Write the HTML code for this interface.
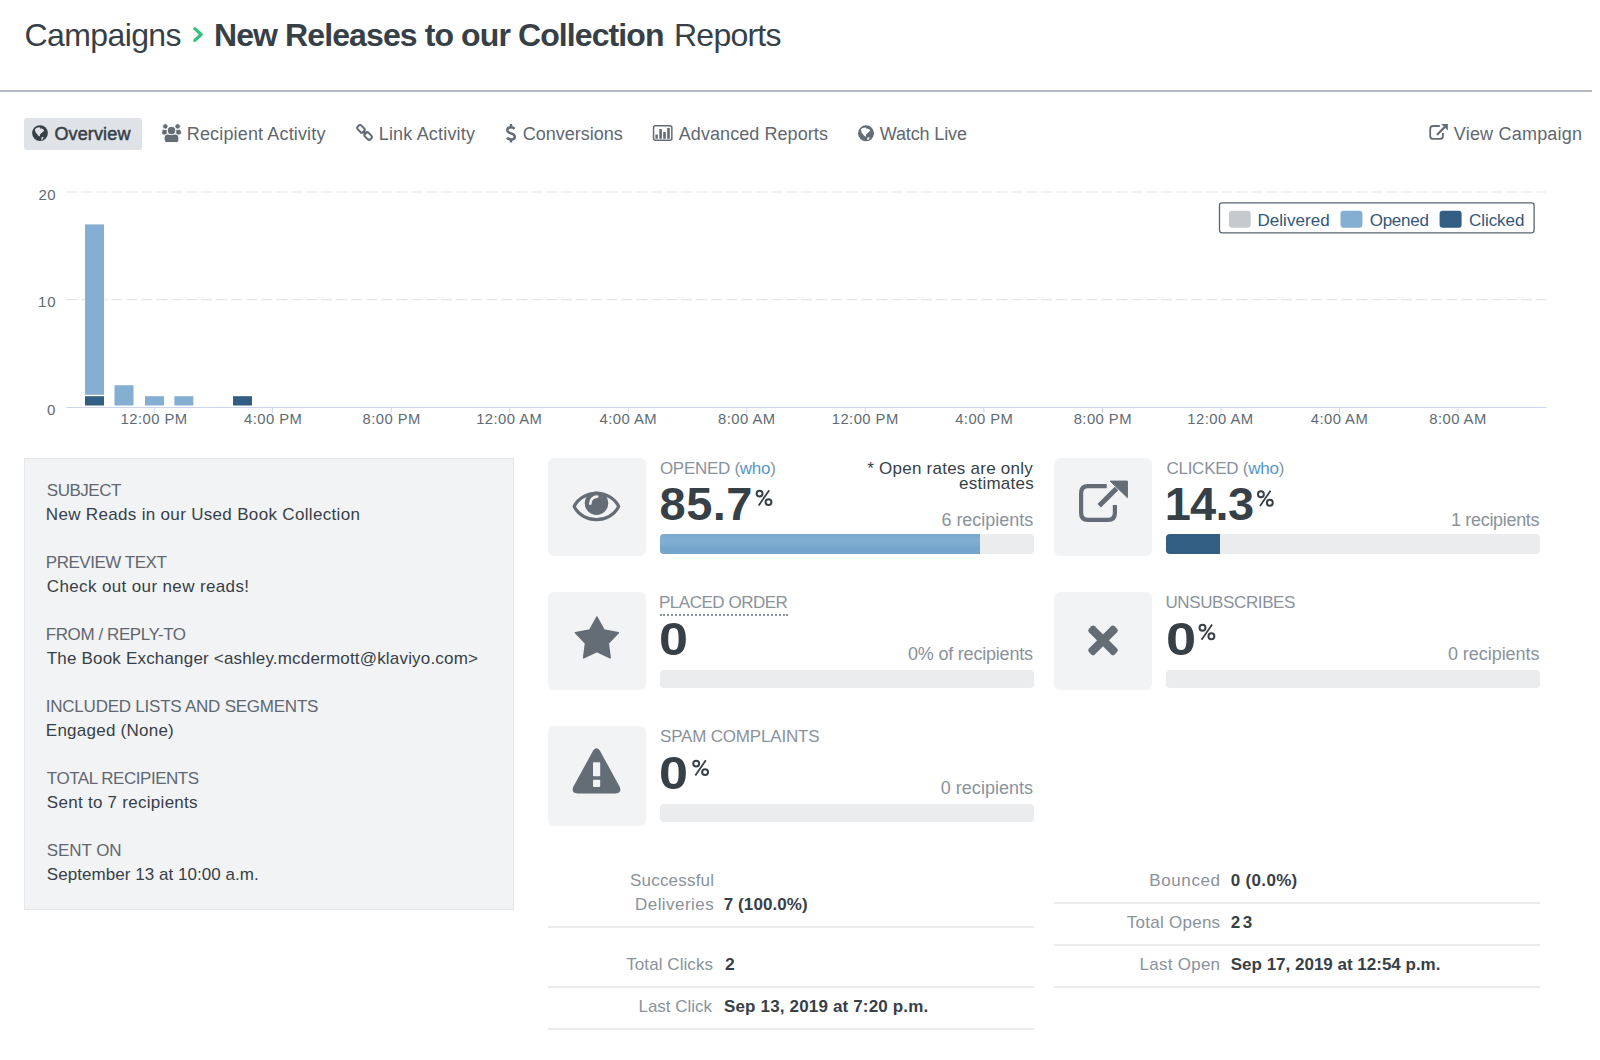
<!DOCTYPE html>
<html>
<head>
<meta charset="utf-8">
<style>
html,body{margin:0;padding:0;background:#fff;}
body{width:1600px;height:1060px;position:relative;overflow:hidden;font-family:"Liberation Sans",sans-serif;-webkit-font-smoothing:antialiased;}
.t{position:absolute;white-space:pre;}
.r{position:absolute;}
</style>
</head>
<body>
<!-- header rule -->
<div class="r" style="left:0;top:90px;width:1592px;height:2px;background:#b5bac2"></div>
<!-- overview pill -->
<div class="r" style="left:24px;top:118px;width:118px;height:32px;background:#dfe2e6;border-radius:3px"></div>
<!-- panel -->
<div class="r" style="left:24px;top:458px;width:488px;height:450px;background:#f2f3f5;border:1px solid #e6e8eb"></div>
<!-- icon boxes -->
<div class="r" style="left:548px;top:458px;width:98px;height:98px;background:#f2f3f5;border-radius:6px"></div>
<div class="r" style="left:1054px;top:458px;width:98px;height:98px;background:#f2f3f5;border-radius:6px"></div>
<div class="r" style="left:548px;top:592px;width:98px;height:98px;background:#f2f3f5;border-radius:6px"></div>
<div class="r" style="left:1054px;top:592px;width:98px;height:98px;background:#f2f3f5;border-radius:6px"></div>
<div class="r" style="left:548px;top:726px;width:98px;height:100px;background:#f2f3f5;border-radius:6px"></div>
<!-- progress bars -->
<div class="r" style="left:660px;top:534px;width:374px;height:20px;background:#ebecee;border-radius:4px;overflow:hidden"><div style="width:320px;height:20px;background:linear-gradient(#79a9cf,#82aed2 30%,#7cabd0 55%,#74a6cd 70%,#74a6cd)"></div></div>
<div class="r" style="left:1166px;top:534px;width:374px;height:20px;background:#ebecee;border-radius:4px;overflow:hidden"><div style="width:54px;height:20px;background:#335e84"></div></div>
<div class="r" style="left:660px;top:670px;width:374px;height:18px;background:#ebecee;border-radius:4px"></div>
<div class="r" style="left:1166px;top:670px;width:374px;height:18px;background:#ebecee;border-radius:4px"></div>
<div class="r" style="left:660px;top:804px;width:374px;height:18px;background:#ebecee;border-radius:4px"></div>
<!-- placed order dotted underline -->
<div class="r" style="left:660px;top:614px;width:128px;height:0;border-top:2px dotted #8a929b"></div>
<!-- table lines -->
<div class="r" style="left:548px;top:926px;width:486px;height:2px;background:#e9ebed"></div>
<div class="r" style="left:548px;top:986px;width:486px;height:2px;background:#e9ebed"></div>
<div class="r" style="left:548px;top:1028px;width:486px;height:2px;background:#e9ebed"></div>
<div class="r" style="left:1054px;top:902px;width:486px;height:2px;background:#e9ebed"></div>
<div class="r" style="left:1054px;top:944px;width:486px;height:2px;background:#e9ebed"></div>
<div class="r" style="left:1054px;top:986px;width:486px;height:2px;background:#e9ebed"></div>

<svg class="r" style="left:0;top:0" width="1600" height="1060" viewBox="0 0 1600 1060">
<!-- chevron -->
<path d="M194.8,28.6 L201.2,34.5 L194.8,40.4" fill="none" stroke="#33c27c" stroke-width="3.2" stroke-linecap="round" stroke-linejoin="round"/>
<!-- overview globe -->
<g>
<circle cx="40" cy="133.1" r="7.9" fill="#373f47"/>
<path d="M34.8,129.4 L36.6,127.8 L40,127.3 L40.6,128.9 L41.6,128.3 L43.4,129.4 L44.3,130.5 L41.6,133 L39.8,134.6 L40.2,136.6 L38.4,135.7 L35.5,132.3 Z" fill="#dfe2e6"/>
<path d="M41.6,137.3 L43.8,137.1 L42.5,139.6 L41.1,139.8 Z" fill="#dfe2e6"/>
</g>
<!-- users -->
<g fill="#646c75" stroke="#fff" stroke-width="0.9">
<path d="M162.4,129.3 H167.2 V135 H163.9 Q161.5,135 161.5,132.8 Z"/>
<path d="M175.8,129.3 H180.6 L181.5,132.8 Q181.5,135 179.1,135 H175.8 Z"/>
<circle cx="165.35" cy="126.4" r="2.7"/>
<circle cx="177.6" cy="126.4" r="2.7"/>
<path d="M164.2,142.5 V137.3 Q164.2,134.1 167.4,134.1 H175.6 Q178.8,134.1 178.8,137.3 V140.3 Q178.8,142.5 176.6,142.5 H166.4 Q164.2,142.5 164.2,140.3 Z"/>
<circle cx="171.5" cy="130.5" r="4.1"/>
</g>
<!-- link -->
<g fill="none" stroke="#646c75" stroke-width="2">
<rect x="-4" y="-2.6" width="8" height="5.2" rx="2.3" transform="translate(361,128.9) rotate(45)"/>
<rect x="-4" y="-2.6" width="8" height="5.2" rx="2.3" transform="translate(368.1,136) rotate(45)"/>
<path d="M362.8,130.7 L366.3,134.2"/>
</g>
<!-- dollar -->
<g fill="none" stroke="#646c75" stroke-width="2.5">
<path d="M514.6,128.8 C513.5,127.6 512.3,127.3 511,127.3 C508.8,127.3 507.3,128.6 507.3,130.3 C507.3,132.3 509.2,132.8 511,133.4 C513,134 514.8,134.8 514.8,136.7 C514.8,138.5 513.1,139.5 511,139.5 C509.4,139.5 508.1,138.9 507,137.6"/>
<path d="M511,123.9 V127.3 M511,139.5 V142.6"/>
</g>
<!-- bar chart icon -->
<g fill="#646c75">
<rect x="653.55" y="125.85" width="18.3" height="14.5" rx="2" fill="none" stroke="#646c75" stroke-width="1.5"/>
<rect x="655.4" y="134.5" width="2.4" height="4.25"/>
<rect x="659.3" y="129.1" width="2.6" height="9.65"/>
<rect x="663.2" y="132" width="2.6" height="6.75"/>
<rect x="667.2" y="128" width="2.6" height="10.75"/>
</g>
<!-- watch live globe -->
<g>
<circle cx="866" cy="133.3" r="8" fill="#646c75"/>
<path d="M860.8,129.6 L862.6,128 L866,127.5 L866.6,129.1 L867.6,128.5 L869.4,129.6 L870.3,130.7 L867.6,133.2 L865.8,134.8 L866.2,136.8 L864.4,135.9 L861.5,132.5 Z" fill="#fff"/>
<path d="M867.6,137.5 L869.8,137.3 L868.5,139.8 L867.1,140 Z" fill="#fff"/>
</g>
<!-- view campaign external link -->
<g fill="none" stroke="#646c75" stroke-width="1.8">
<path d="M1439.8,126 H1433.2 Q1430.2,126 1430.2,129 V135.9 Q1430.2,138.9 1433.2,138.9 H1439.9 Q1442.9,138.9 1442.9,135.9 V133"/>
<path d="M1437.6,134.2 L1444,127.8" stroke-width="2.3" stroke-linecap="round"/>
</g>
<path d="M1441.2,124.1 H1447.9 V130.5 Z" fill="#646c75"/>

<!-- chart grid -->
<line x1="66.25" y1="192" x2="1546" y2="192" stroke="#e6e6e6" stroke-width="1.2" stroke-dasharray="11,4"/>
<line x1="66.25" y1="299.7" x2="1546" y2="299.7" stroke="#e6e6e6" stroke-width="1.2" stroke-dasharray="11,4"/>
<line x1="66.5" y1="407.5" x2="1546.7" y2="407.5" stroke="#ccd6eb" stroke-width="1"/>
<g fill="none" stroke="#373f47" stroke-width="2"><circle cx="759.60" cy="493.60" r="2.95"/><circle cx="768.50" cy="502.10" r="2.95"/><path d="M769.20,490.20 L758.70,505.50" stroke-width="1.8"/></g><g fill="none" stroke="#373f47" stroke-width="2"><circle cx="1260.90" cy="494.20" r="2.95"/><circle cx="1269.80" cy="502.70" r="2.95"/><path d="M1270.50,490.80 L1260.00,506.10" stroke-width="1.8"/></g><g fill="none" stroke="#373f47" stroke-width="2"><circle cx="1202.50" cy="627.80" r="2.95"/><circle cx="1211.40" cy="636.30" r="2.95"/><path d="M1212.10,624.40 L1201.60,639.70" stroke-width="1.8"/></g><g fill="none" stroke="#373f47" stroke-width="2"><circle cx="696.20" cy="763.60" r="2.95"/><circle cx="705.10" cy="772.10" r="2.95"/><path d="M705.80,760.20 L695.30,775.50" stroke-width="1.8"/></g><line x1="154.20" y1="407.5" x2="154.20" y2="413" stroke="#ccd6eb" stroke-width="1"/><line x1="272.73" y1="407.5" x2="272.73" y2="413" stroke="#ccd6eb" stroke-width="1"/><line x1="391.25" y1="407.5" x2="391.25" y2="413" stroke="#ccd6eb" stroke-width="1"/><line x1="509.78" y1="407.5" x2="509.78" y2="413" stroke="#ccd6eb" stroke-width="1"/><line x1="628.31" y1="407.5" x2="628.31" y2="413" stroke="#ccd6eb" stroke-width="1"/><line x1="746.84" y1="407.5" x2="746.84" y2="413" stroke="#ccd6eb" stroke-width="1"/><line x1="865.36" y1="407.5" x2="865.36" y2="413" stroke="#ccd6eb" stroke-width="1"/><line x1="983.89" y1="407.5" x2="983.89" y2="413" stroke="#ccd6eb" stroke-width="1"/><line x1="1102.42" y1="407.5" x2="1102.42" y2="413" stroke="#ccd6eb" stroke-width="1"/><line x1="1220.95" y1="407.5" x2="1220.95" y2="413" stroke="#ccd6eb" stroke-width="1"/><line x1="1339.47" y1="407.5" x2="1339.47" y2="413" stroke="#ccd6eb" stroke-width="1"/><line x1="1458.00" y1="407.5" x2="1458.00" y2="413" stroke="#ccd6eb" stroke-width="1"/>
<!-- bars -->
<rect x="85" y="224.4" width="19" height="170.4" fill="#84afd3"/>
<rect x="85" y="396.2" width="19" height="9.3" fill="#335e84"/>
<rect x="114.5" y="385.2" width="19" height="20.3" fill="#84afd3"/>
<rect x="145" y="396.2" width="19" height="9.3" fill="#84afd3"/>
<rect x="174.4" y="396.2" width="19" height="9.3" fill="#84afd3"/>
<rect x="233" y="396.2" width="19" height="9.3" fill="#335e84"/>
<!-- legend -->
<rect x="1219.5" y="202.8" width="314.6" height="30" rx="2.5" fill="#fff" stroke="#5a6572" stroke-width="1.3"/>
<rect x="1228.9" y="210.7" width="21.8" height="17" rx="3" fill="#c6c9cd"/>
<rect x="1340.5" y="210.7" width="21.9" height="17" rx="3" fill="#84afd3"/>
<rect x="1439.6" y="210.7" width="22" height="17" rx="3" fill="#335e84"/>

<!-- eye -->
<g>
<path d="M574.1,506.4 C583,489 610,489 618.7,506.4 C610,524 583,524 574.1,506.4 Z" fill="none" stroke="#646c75" stroke-width="3.2" stroke-linejoin="round"/>
<circle cx="596.5" cy="503.2" r="11.75" fill="#646c75"/>
<path d="M590.3,503.6 A6.8,6.8 0 0 1 597.2,496.6" fill="none" stroke="#f2f3f5" stroke-width="2.7" stroke-linecap="round"/>
</g>
<!-- clicked external link -->
<g fill="none" stroke="#646c75" stroke-width="4.2">
<path d="M1106.7,486.1 H1088 Q1081.1,486.1 1081.1,493 V512.9 Q1081.1,519.8 1088,519.8 H1108 Q1114.9,519.8 1114.9,512.9 V504.9"/>
<path d="M1099.2,505.7 L1116.5,488.4" stroke-width="5"/>
</g>
<path d="M1110.1,481.1 H1127.4 V497.6 Z" fill="#646c75" stroke="#646c75" stroke-width="1" stroke-linejoin="round"/>
<!-- star -->
<path id="star" fill="#646c75" stroke="#646c75" stroke-width="1.5" stroke-linejoin="round" d="M596.90,617.00 L603.95,629.89 L618.39,632.62 L608.31,643.31 L610.18,657.88 L596.90,651.60 L583.62,657.88 L585.49,643.31 L575.41,632.62 L589.85,629.89 Z"/>
<!-- times -->
<g fill="#646c75" transform="translate(1103,640.4)">
<rect x="-18.2" y="-4.15" width="36.4" height="8.3" rx="2.5" transform="rotate(45)"/>
<rect x="-18.2" y="-4.15" width="36.4" height="8.3" rx="2.5" transform="rotate(-45)"/>
</g>
<!-- warning -->
<path d="M593.2,750.5 Q596.5,746 599.8,750.5 L619.8,787 Q622,793.4 615.5,793.4 H577.5 Q571,793.4 573.2,787 Z" fill="#646c75"/>
<rect x="593" y="762.3" width="7.2" height="13.9" rx="0.8" fill="#f2f3f5"/>
<rect x="593" y="779.8" width="7.2" height="7.1" rx="0.8" fill="#f2f3f5"/>
</svg>

<div class="t" style="left:24.60px;top:18.90px;font-size:32px;line-height:32px;letter-spacing:-0.620px;color:#373f47;">Campaigns</div>
<div class="t" style="left:214.00px;top:19.00px;font-size:32px;line-height:32px;letter-spacing:-0.897px;color:#373f47;font-weight:700;">New Releases to our Collection</div>
<div class="t" style="left:674.00px;top:19.00px;font-size:32px;line-height:32px;letter-spacing:-0.758px;color:#373f47;">Reports</div>
<div class="t" style="left:54.40px;top:125.00px;font-size:18px;line-height:18px;letter-spacing:0.141px;color:#373f47;-webkit-text-stroke:0.5px #373f47;">Overview</div>
<div class="t" style="left:186.80px;top:125.00px;font-size:18px;line-height:18px;letter-spacing:0.150px;color:#5f6770;">Recipient Activity</div>
<div class="t" style="left:378.70px;top:125.00px;font-size:18px;line-height:18px;letter-spacing:0.189px;color:#5f6770;">Link Activity</div>
<div class="t" style="left:522.80px;top:125.00px;font-size:18px;line-height:18px;letter-spacing:-0.015px;color:#5f6770;">Conversions</div>
<div class="t" style="left:678.80px;top:125.00px;font-size:18px;line-height:18px;letter-spacing:0.068px;color:#5f6770;">Advanced Reports</div>
<div class="t" style="left:879.70px;top:125.00px;font-size:18px;line-height:18px;letter-spacing:-0.117px;color:#5f6770;">Watch Live</div>
<div class="t" style="left:1453.80px;top:125.00px;font-size:18px;line-height:18px;letter-spacing:0.206px;color:#5f6770;">View Campaign</div>
<div class="t" style="left:38.40px;top:187.00px;font-size:15px;line-height:15px;letter-spacing:0.558px;color:#606a74;">20</div>
<div class="t" style="left:38.00px;top:293.90px;font-size:15px;line-height:15px;letter-spacing:0.958px;color:#606a74;">10</div>
<div class="t" style="left:47.10px;top:401.60px;font-size:15px;line-height:15px;letter-spacing:0.000px;color:#606a74;">0</div>
<div class="t" style="left:120.62px;top:412.20px;font-size:14.8px;line-height:14.8px;letter-spacing:0.450px;color:#606a74;">12:00 PM</div>
<div class="t" style="left:243.99px;top:412.20px;font-size:14.8px;line-height:14.8px;letter-spacing:0.450px;color:#606a74;">4:00 PM</div>
<div class="t" style="left:362.51px;top:412.20px;font-size:14.8px;line-height:14.8px;letter-spacing:0.450px;color:#606a74;">8:00 PM</div>
<div class="t" style="left:476.20px;top:412.20px;font-size:14.8px;line-height:14.8px;letter-spacing:0.450px;color:#606a74;">12:00 AM</div>
<div class="t" style="left:599.57px;top:412.20px;font-size:14.8px;line-height:14.8px;letter-spacing:0.450px;color:#606a74;">4:00 AM</div>
<div class="t" style="left:718.10px;top:412.20px;font-size:14.8px;line-height:14.8px;letter-spacing:0.450px;color:#606a74;">8:00 AM</div>
<div class="t" style="left:831.78px;top:412.20px;font-size:14.8px;line-height:14.8px;letter-spacing:0.450px;color:#606a74;">12:00 PM</div>
<div class="t" style="left:955.15px;top:412.20px;font-size:14.8px;line-height:14.8px;letter-spacing:0.450px;color:#606a74;">4:00 PM</div>
<div class="t" style="left:1073.68px;top:412.20px;font-size:14.8px;line-height:14.8px;letter-spacing:0.450px;color:#606a74;">8:00 PM</div>
<div class="t" style="left:1187.37px;top:412.20px;font-size:14.8px;line-height:14.8px;letter-spacing:0.450px;color:#606a74;">12:00 AM</div>
<div class="t" style="left:1310.73px;top:412.20px;font-size:14.8px;line-height:14.8px;letter-spacing:0.450px;color:#606a74;">4:00 AM</div>
<div class="t" style="left:1429.26px;top:412.20px;font-size:14.8px;line-height:14.8px;letter-spacing:0.450px;color:#606a74;">8:00 AM</div>
<div class="t" style="left:1257.40px;top:211.60px;font-size:17px;line-height:17px;letter-spacing:0.056px;color:#34577a;">Delivered</div>
<div class="t" style="left:1369.70px;top:211.60px;font-size:17px;line-height:17px;letter-spacing:-0.268px;color:#34577a;">Opened</div>
<div class="t" style="left:1468.90px;top:211.60px;font-size:17px;line-height:17px;letter-spacing:-0.031px;color:#34577a;">Clicked</div>
<div class="t" style="left:46.80px;top:482.00px;font-size:17px;line-height:17px;letter-spacing:-0.478px;color:#5f6770;">SUBJECT</div>
<div class="t" style="left:45.80px;top:506.00px;font-size:17px;line-height:17px;letter-spacing:0.325px;color:#373f47;">New Reads in our Used Book Collection</div>
<div class="t" style="left:45.80px;top:554.00px;font-size:17px;line-height:17px;letter-spacing:-0.481px;color:#5f6770;">PREVIEW TEXT</div>
<div class="t" style="left:46.80px;top:578.00px;font-size:17px;line-height:17px;letter-spacing:0.370px;color:#373f47;">Check out our new reads!</div>
<div class="t" style="left:45.80px;top:626.00px;font-size:17px;line-height:17px;letter-spacing:-0.420px;color:#5f6770;">FROM / REPLY-TO</div>
<div class="t" style="left:46.80px;top:650.00px;font-size:17px;line-height:17px;letter-spacing:0.184px;color:#373f47;">The Book Exchanger &lt;ashley.mcdermott@klaviyo.com&gt;</div>
<div class="t" style="left:45.80px;top:698.00px;font-size:17px;line-height:17px;letter-spacing:-0.233px;color:#5f6770;">INCLUDED LISTS AND SEGMENTS</div>
<div class="t" style="left:45.80px;top:722.00px;font-size:17px;line-height:17px;letter-spacing:0.247px;color:#373f47;">Engaged (None)</div>
<div class="t" style="left:46.80px;top:770.00px;font-size:17px;line-height:17px;letter-spacing:-0.468px;color:#5f6770;">TOTAL RECIPIENTS</div>
<div class="t" style="left:46.80px;top:794.00px;font-size:17px;line-height:17px;letter-spacing:0.277px;color:#373f47;">Sent to 7 recipients</div>
<div class="t" style="left:46.80px;top:842.00px;font-size:17px;line-height:17px;letter-spacing:-0.081px;color:#5f6770;">SENT ON</div>
<div class="t" style="left:46.80px;top:866.00px;font-size:17px;line-height:17px;letter-spacing:0.047px;color:#373f47;">September 13 at 10:00 a.m.</div>
<div class="t" style="left:659.90px;top:459.90px;font-size:17px;line-height:17px;letter-spacing:-0.279px;color:#8a929b;"><span style="color:#8a929b">OPENED (</span><span style="color:#5596cc">who</span><span style="color:#8a929b">)</span></div>
<div class="t" style="left:659.60px;top:480.20px;font-size:47px;line-height:47px;letter-spacing:0.421px;color:#373f47;font-weight:700;">85.7</div>
<div class="t" style="left:867.30px;top:459.90px;font-size:17px;line-height:17px;letter-spacing:0.238px;color:#373f47;">* Open rates are only</div>
<div class="t" style="left:959.00px;top:475.30px;font-size:17px;line-height:17px;letter-spacing:0.244px;color:#373f47;">estimates</div>
<div class="t" style="left:941.40px;top:511.40px;font-size:18px;line-height:18px;letter-spacing:-0.013px;color:#8a929b;">6 recipients</div>
<div class="t" style="left:1166.40px;top:459.90px;font-size:17px;line-height:17px;letter-spacing:-0.246px;color:#8a929b;"><span style="color:#8a929b">CLICKED (</span><span style="color:#5596cc">who</span><span style="color:#8a929b">)</span></div>
<div class="t" style="left:1164.70px;top:480.20px;font-size:47px;line-height:47px;letter-spacing:-0.712px;color:#373f47;font-weight:700;">14.3</div>
<div class="t" style="left:1451.00px;top:511.40px;font-size:18px;line-height:18px;letter-spacing:-0.323px;color:#8a929b;">1 recipients</div>
<div class="t" style="left:659.00px;top:594.10px;font-size:17px;line-height:17px;letter-spacing:-0.479px;color:#8a929b;">PLACED ORDER</div>
<div class="t" style="left:659.49px;top:614.70px;font-size:47px;line-height:47px;letter-spacing:0.000px;color:#373f47;font-weight:700;transform:scaleX(1.108);transform-origin:0 0;">0</div>
<div class="t" style="left:908.00px;top:645.40px;font-size:18px;line-height:18px;letter-spacing:-0.204px;color:#8a929b;">0% of recipients</div>
<div class="t" style="left:1165.40px;top:594.10px;font-size:17px;line-height:17px;letter-spacing:-0.373px;color:#8a929b;">UNSUBSCRIBES</div>
<div class="t" style="left:1165.55px;top:614.70px;font-size:47px;line-height:47px;letter-spacing:0.000px;color:#373f47;font-weight:700;transform:scaleX(1.154);transform-origin:0 0;">0</div>
<div class="t" style="left:1447.90px;top:645.40px;font-size:18px;line-height:18px;letter-spacing:-0.041px;color:#8a929b;">0 recipients</div>
<div class="t" style="left:660.00px;top:728.00px;font-size:17px;line-height:17px;letter-spacing:-0.187px;color:#8a929b;">SPAM COMPLAINTS</div>
<div class="t" style="left:659.49px;top:748.60px;font-size:47px;line-height:47px;letter-spacing:0.000px;color:#373f47;font-weight:700;transform:scaleX(1.108);transform-origin:0 0;">0</div>
<div class="t" style="left:940.80px;top:779.40px;font-size:18px;line-height:18px;letter-spacing:0.014px;color:#8a929b;">0 recipients</div>
<div class="t" style="left:630.00px;top:871.80px;font-size:17px;line-height:17px;letter-spacing:0.197px;color:#8a929b;">Successful</div>
<div class="t" style="left:635.00px;top:895.50px;font-size:17px;line-height:17px;letter-spacing:0.452px;color:#8a929b;">Deliveries</div>
<div class="t" style="left:723.75px;top:895.50px;font-size:17px;line-height:17px;letter-spacing:0.084px;color:#373f47;font-weight:700;">7 (100.0%)</div>
<div class="t" style="left:626.25px;top:956.00px;font-size:17px;line-height:17px;letter-spacing:0.072px;color:#8a929b;">Total Clicks</div>
<div class="t" style="left:724.50px;top:956.00px;font-size:17px;line-height:17px;letter-spacing:0.000px;color:#373f47;font-weight:700;transform:scaleX(1.028);transform-origin:0 0;">2</div>
<div class="t" style="left:638.50px;top:998.00px;font-size:17px;line-height:17px;letter-spacing:-0.021px;color:#8a929b;">Last Click</div>
<div class="t" style="left:724.00px;top:998.00px;font-size:17px;line-height:17px;letter-spacing:0.162px;color:#373f47;font-weight:700;">Sep 13, 2019 at 7:20 p.m.</div>
<div class="t" style="left:1149.25px;top:872.20px;font-size:17px;line-height:17px;letter-spacing:0.615px;color:#8a929b;">Bounced</div>
<div class="t" style="left:1230.75px;top:872.20px;font-size:17px;line-height:17px;letter-spacing:0.323px;color:#373f47;font-weight:700;">0 (0.0%)</div>
<div class="t" style="left:1126.80px;top:914.20px;font-size:17px;line-height:17px;letter-spacing:0.258px;color:#8a929b;">Total Opens</div>
<div class="t" style="left:1230.75px;top:914.20px;font-size:17px;line-height:17px;letter-spacing:2.545px;color:#373f47;font-weight:700;">23</div>
<div class="t" style="left:1139.50px;top:956.20px;font-size:17px;line-height:17px;letter-spacing:0.264px;color:#8a929b;">Last Open</div>
<div class="t" style="left:1230.75px;top:956.20px;font-size:17px;line-height:17px;letter-spacing:-0.004px;color:#373f47;font-weight:700;">Sep 17, 2019 at 12:54 p.m.</div>
</body>
</html>
